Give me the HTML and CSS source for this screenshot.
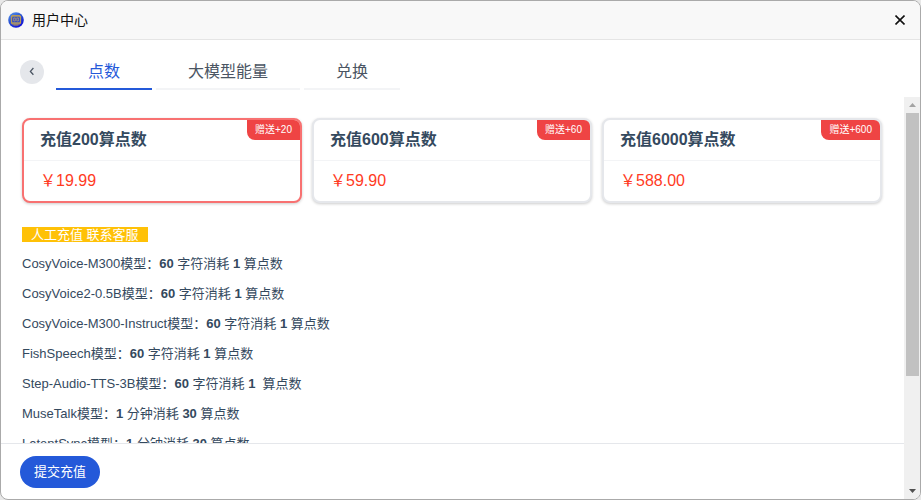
FILE: index.html
```html
<!DOCTYPE html>
<html lang="zh-CN">
<head>
  <meta charset="UTF-8">
  <meta name="viewport" content="width=device-width, initial-scale=1">
  <title>用户中心</title>
  <link rel="stylesheet" href="styles.css">
</head>
<body>
  <div class="window">
    <header class="titlebar">
      <svg class="logo" viewBox="0 0 16 16" aria-hidden="true">
        <defs>
          <linearGradient id="logoBg" x1="0" y1="0" x2="0.6" y2="1">
            <stop offset="0" stop-color="#5b9cf0"/>
            <stop offset="0.5" stop-color="#2a55d4"/>
            <stop offset="1" stop-color="#1212d8"/>
          </linearGradient>
        </defs>
        <circle cx="8" cy="8" r="7.8" fill="url(#logoBg)"/>
        <path d="M3.5 4.5l1-1h7l1 1v6.5l-1 1h-7l-1-1z" fill="#8a8580" stroke="#b99a58" stroke-width="1.2"/>
        <rect x="4.3" y="5.3" width="7.4" height="4.6" fill="#1f3fd0"/>
        <path d="M5.7 6v3h1.6V6zM8.8 6v3h1.6V6z" fill="none" stroke="#b9a070" stroke-width="0.8"/>
        <path d="M5.5 13h5" stroke="#b99a58" stroke-width="1"/>
      </svg>
      <h1 class="title">用户中心</h1>
      <button class="close" type="button" aria-label="关闭">
        <svg viewBox="0 0 10 10"><path d="M0.5 0.5l9 9M9.5 0.5L0.5 9.5" stroke="#111" stroke-width="1.6" fill="none"/></svg>
      </button>
    </header>

    <nav class="tabs">
      <button class="back" type="button" aria-label="返回">
        <svg viewBox="0 0 8 10"><path d="M5.4 1L2.4 4.4l3 3.4" stroke="#4b5563" stroke-width="1.3" fill="none"/></svg>
      </button>
      <button class="tab active" type="button">点数</button>
      <button class="tab" type="button">大模型能量</button>
      <button class="tab" type="button">兑换</button>
    </nav>

    <div class="main">
      <div class="page">
        <div class="content">
          <div class="cards">
            <button class="card selected" type="button">
              <span class="badge">赠送+20</span>
              <span class="card-name">充值200算点数</span>
              <span class="price">￥19.99</span>
            </button>
            <button class="card" type="button">
              <span class="badge">赠送+60</span>
              <span class="card-name">充值600算点数</span>
              <span class="price">￥59.90</span>
            </button>
            <button class="card" type="button">
              <span class="badge">赠送+600</span>
              <span class="card-name">充值6000算点数</span>
              <span class="price">￥588.00</span>
            </button>
          </div>

          <a class="service" href="#">人工充值 联系客服</a>

          <div class="rules">
            <p>CosyVoice-M300模型：<b>60</b> 字符消耗 <b>1</b> 算点数</p>
            <p>CosyVoice2-0.5B模型：<b>60</b> 字符消耗 <b>1</b> 算点数</p>
            <p>CosyVoice-M300-Instruct模型：<b>60</b> 字符消耗 <b>1</b> 算点数</p>
            <p>FishSpeech模型：<b>60</b> 字符消耗 <b>1</b> 算点数</p>
            <p>Step-Audio-TTS-3B模型：<b>60</b> 字符消耗 <b>1</b> &nbsp;算点数</p>
            <p>MuseTalk模型：<b>1</b> 分钟消耗 <b>30</b> 算点数</p>
            <p>LatentSync模型：<b>1</b> 分钟消耗 <b>30</b> 算点数</p>
          </div>
        </div>
        <footer class="footer">
          <button class="submit" type="button">提交充值</button>
        </footer>
      </div>
      <div class="scrollbar" aria-hidden="true">
        <svg class="arrow up" viewBox="0 0 7 4"><path d="M0 4L3.5 0L7 4z"/></svg>
        <div class="track"><div class="thumb"></div></div>
        <svg class="arrow" viewBox="0 0 7 4"><path d="M0 0h7L3.5 4z"/></svg>
      </div>
    </div>
  </div>
</body>
</html>
```
FILE: styles.css
```css
* {
  box-sizing: border-box;
}
body {
  margin: 0;
  background: #e8e8e8;
  color: #34495e;
  font-family: "Liberation Sans", "Noto Sans CJK SC", sans-serif;
  font-size: 13px;
}
button {
  font-family: inherit;
  color: inherit;
  border: none;
  background: none;
  padding: 0;
  cursor: pointer;
}
.window {
  display: flex;
  flex-direction: column;
  height: 100vh;
  border: 1px solid #aaa;
  border-radius: 8px;
  background: #fff;
  overflow: hidden;
}

/* title bar */
.titlebar {
  display: flex;
  align-items: center;
  flex: none;
  height: 39px;
  padding: 0 15px 0 7px;
  background: #f8f8f8;
  border-bottom: 1px solid #e5e5e5;
}
.logo {
  width: 16px;
  height: 16px;
}
.title {
  flex: 1;
  margin: 0 0 0 8px;
  padding-bottom: 2px;
  font-size: 14px;
  font-weight: normal;
  color: #111;
}
.close {
  display: flex;
}
.close svg {
  width: 10px;
  height: 10px;
}

/* tabs */
.tabs {
  display: flex;
  align-items: center;
  flex: none;
  gap: 4px;
  height: 57px;
  padding: 6px 19px 0;
}
.back {
  display: flex;
  align-items: center;
  justify-content: center;
  width: 24px;
  height: 24px;
  margin-right: 8px;
  border-radius: 50%;
  background: #e5e7eb;
}
.back svg {
  width: 8px;
  height: 10px;
}
.tab {
  height: 36px;
  padding: 0 32px 2px;
  border-bottom: 2px solid #f3f4f6;
  font-size: 16px;
  color: #4b5563;
}
.tab.active {
  border-color: #2459d9;
  color: #2459d9;
}

.main {
  display: flex;
  flex: 1;
  min-height: 0;
}
.page {
  display: flex;
  flex-direction: column;
  flex: 1;
  min-width: 0;
}
.content {
  flex: 1;
  min-height: 0;
  padding: 21px;
  overflow-y: auto;
  scrollbar-width: none;
}

/* price cards */
.cards {
  display: grid;
  grid-template-columns: repeat(auto-fill, 280px);
  gap: 10px;
}
.card {
  position: relative;
  display: flex;
  flex-direction: column;
  border: 2px solid #e5e7eb;
  border-radius: 8px;
  background: #fff;
  text-align: left;
  font-size: 16px;
  overflow: hidden;
  box-shadow: 0 1px 3px rgba(0, 0, 0, 0.2);
}
.card.selected {
  border-color: #f87171;
}
.card-name {
  padding: 0 16px;
  border-bottom: 1px solid #f3f4f6;
  font-weight: bold;
  line-height: 40px;
}
.price {
  padding: 0 16px;
  line-height: 40px;
  color: #ff3b1f;
}
.badge {
  position: absolute;
  top: 0;
  right: 0;
  padding: 0 8px;
  border-bottom-left-radius: 8px;
  background: #ef4444;
  color: #fff;
  font-size: 10px;
  line-height: 20px;
}

.service {
  display: table;
  margin-top: 24px;
  padding: 0 9px;
  background: #ffc107;
  color: #fff;
  line-height: 15px;
  text-decoration: none;
}
.rules p {
  margin: 10px 0;
  line-height: 20px;
}
.rules {
  margin-top: 12px;
}

.footer {
  flex: none;
  padding: 12px 19px 11px;
  border-top: 1px solid #e5e7eb;
}
.submit {
  height: 32px;
  padding: 0 14px 4px;
  border-radius: 16px;
  background: #2459d9;
  color: #fff;
  font-size: 13px;
}

/* scrollbar */
.scrollbar {
  display: flex;
  flex-direction: column;
  align-items: center;
  flex: none;
  width: 16px;
  padding: 6px 0;
  background: #f0f0f0;
}
.arrow {
  width: 7px;
  height: 4px;
  fill: #505050;
}
.arrow.up {
  fill: #a3a3a3;
}
.track {
  flex: 1;
  width: 13px;
  margin: 6px 0;
}
.thumb {
  height: 71%;
  background: #c1c1c1;
}
```
